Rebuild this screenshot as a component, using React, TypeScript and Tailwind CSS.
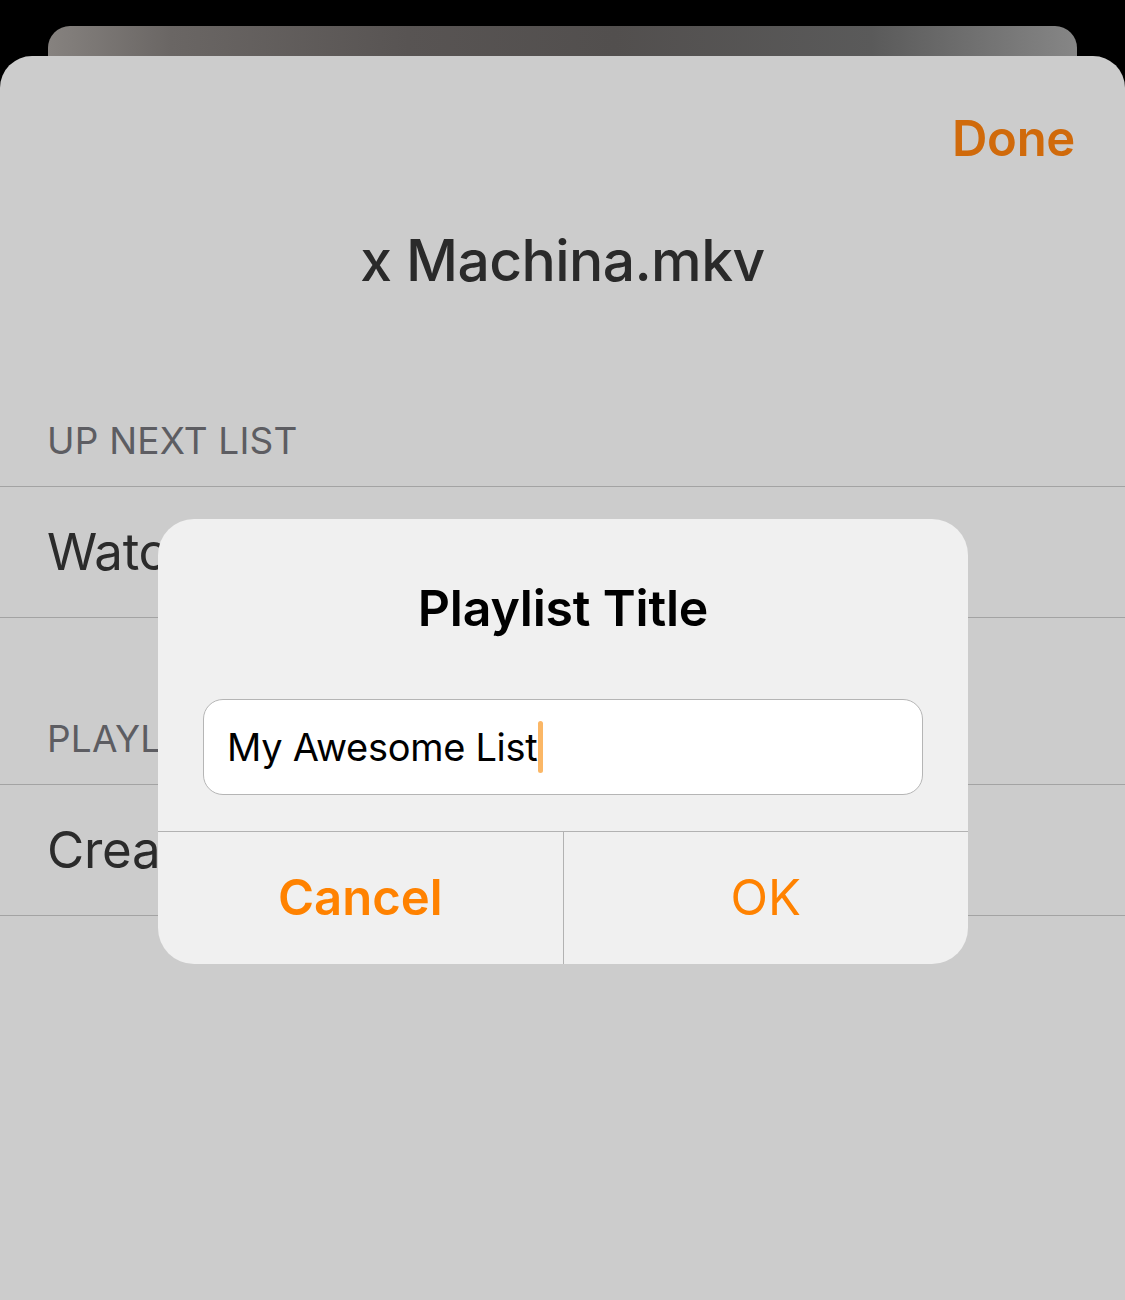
import React from "react";

const font = { fontFamily: "Inter, 'Noto Sans', 'Liberation Sans', sans-serif" };

export default function App() {
  return (
    <div className="relative w-[1125px] h-[1300px] bg-black overflow-hidden" style={font}>
      <div className="pt-[26px]">
        <div className="mx-[48px] h-[30px] rounded-t-[22px] bg-[linear-gradient(to_right,#86827f_0%,#6a6664_12%,#585453_35%,#524f4e_55%,#5a5a5a_80%,#868686_100%)]" />
        <div className="h-[1244px] bg-[#cccccc] rounded-t-[32px]">
          <div className="h-[166px] flex items-center justify-end pr-[50px]">
            <span className="text-[49px] font-semibold text-[#d06a0b] tracking-[-0.3px]">Done</span>
          </div>
          <div className="h-[78px] flex items-center justify-center">
            <span className="text-[57px] font-medium text-[#2a2a2a] tracking-[-0.6px]">x Machina.mkv</span>
          </div>
          <div className="h-[186px] flex items-end pl-[47px] pb-[27px]">
            <span className="text-[37px] text-[#5d5d62] leading-none tracking-[0.2px]">UP NEXT LIST</span>
          </div>
          <div className="h-[132px] border-y border-[#a3a3a3] flex items-center pl-[47px]">
            <span className="text-[51px] text-[#2b2b2b] tracking-[-0.3px]">Watch</span>
          </div>
          <div className="h-[166px] flex items-end pl-[47px] pb-[27px]">
            <span className="text-[37px] text-[#5d5d62] leading-none tracking-[0.2px]">PLAYLISTS</span>
          </div>
          <div className="h-[132px] border-y border-[#a3a3a3] flex items-center pl-[47px]">
            <span className="text-[51px] text-[#2b2b2b] tracking-[-0.3px]">Create</span>
          </div>
        </div>
      </div>

      <div className="absolute left-[158px] top-[519px] w-[810px] h-[445px] rounded-[36px] bg-[#f0f0f0] flex flex-col overflow-hidden">
        <div className="h-[180px] flex items-center justify-center pb-[2px]">
          <span className="text-[50px] font-semibold text-black tracking-[-0.2px]">Playlist Title</span>
        </div>
        <div className="px-[45px]">
          <div className="h-[96px] rounded-[20px] border border-[#b5b5b5] bg-white flex items-center pl-[23px]">
            <span className="text-[38px] text-black tracking-[-0.3px]">My Awesome List</span>
            <span className="ml-[1px] w-[5px] h-[52px] rounded-full bg-[#fbb766]" />
          </div>
        </div>
        <div className="mt-[36px] flex-1 border-t border-[#b2b2b2] flex">
          <div className="flex-1 flex items-center justify-center border-r border-[#b2b2b2]">
            <span className="text-[49px] font-semibold text-[#ff8200]">Cancel</span>
          </div>
          <div className="flex-1 flex items-center justify-center">
            <span className="text-[49px] text-[#ff8200]">OK</span>
          </div>
        </div>
      </div>
    </div>
  );
}
